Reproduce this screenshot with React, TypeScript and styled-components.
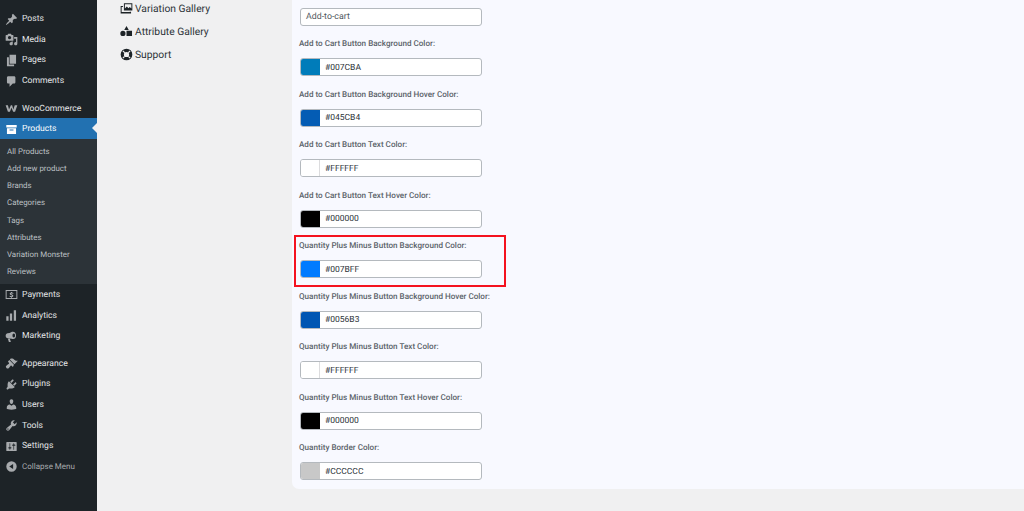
import React from "react";
import styled, { createGlobalStyle } from "styled-components";

const Global = createGlobalStyle`
  html, body { margin: 0; padding: 0; background: #f0f0f1; }
  body { font-family: Roboto, "Open Sans", sans-serif; overflow: hidden; text-rendering: geometricPrecision; }
  * { box-sizing: border-box; }
`;

const Page = styled.div`
  display: flex;
  width: 1024px;
  height: 511px;
  overflow: hidden;
  background: #f0f0f1;
`;

const Sidebar = styled.nav`
  width: 97px;
  flex: none;
  background: #1d2327;
  padding-top: 8px;
  display: flex;
  flex-direction: column;
`;

const MenuGroup = styled.div`
  display: flex;
  flex-direction: column;
  margin-bottom: 7px;
`;

const MenuItem = styled.div<{ $active?: boolean; $dim?: boolean }>`
  position: relative;
  height: 20.6px;
  display: flex;
  align-items: center;
  gap: 4px;
  padding: 2px 0 0 5px;
  font-size: ${(p) => (p.$dim ? "8px" : "8.6px")};
  color: ${(p) => (p.$active ? "#fff" : p.$dim ? "#a7aaad" : "#e4e6e8")};
  background: ${(p) => (p.$active ? "#2271b1" : "transparent")};
  svg { flex: none; width: 13px; height: 13px; fill: ${(p) => (p.$active ? "#fff" : "#a7aaad")}; }
`;

const Notch = styled.span`
  position: absolute;
  right: 0;
  top: 5.5px;
  border: 5px solid transparent;
  border-right-color: #f0f0f1;
  border-left-width: 0;
`;

const Submenu = styled.div`
  background: #2c3338;
  padding: 4px 0 4px 7px;
  display: flex;
  flex-direction: column;
`;

const SubItem = styled.div`
  height: 17.15px;
  display: flex;
  align-items: center;
  padding-top: 0.8px;
  font-size: 7.9px;
  color: #bcc0c4;
`;

const Main = styled.main`
  flex: 1;
  display: flex;
  align-items: flex-start;
`;

const SideTabs = styled.div`
  width: 195px;
  flex: none;
  padding: 0 0 0 23px;
  margin-top: -3.5px;
  display: flex;
  flex-direction: column;
`;

const Tab = styled.div`
  height: 23px;
  display: flex;
  align-items: center;
  gap: 2px;
  font-size: 10.3px;
  color: #2c3338;
  svg { flex: none; width: 13px; height: 13px; fill: #1d2327; }
`;

const Panel = styled.section`
  flex: 1;
  height: 489px;
  background: #f8f9ff;
  border-bottom-left-radius: 7px;
  padding: 7.5px 0 0 8px;
  display: flex;
  flex-direction: column;
`;

const TextBox = styled.div`
  width: 182px;
  height: 18px;
  flex: none;
  background: #fff;
  border: 1px solid #b4b9be;
  border-radius: 3px;
  display: flex;
  align-items: center;
  padding: 1px 0 0 5px;
  font-size: 8.8px;
  color: #50575e;
`;

const Field = styled.div`
  position: relative;
  flex: none;
  height: 50.5px;
  display: flex;
  flex-direction: column;
  padding-top: 12.5px;
`;

const FieldLabel = styled.div`
  height: 11px;
  line-height: 11px;
  font-size: 8.1px;
  font-weight: 500;
  color: #5a6269;
  white-space: nowrap;
  margin-left: -1px;
`;

const ColorBox = styled.div`
  margin-top: 9px;
  width: 182px;
  height: 18px;
  background: #fff;
  border: 1px solid #b4b9be;
  border-radius: 3px;
  display: flex;
  align-items: center;
  overflow: hidden;
  font-size: 8.5px;
  color: #2c3338;
`;

const ColorValue = styled.span`
  padding-top: 1.5px;
`;

const Swatch = styled.span<{ $color: string }>`
  width: 19px;
  height: 100%;
  flex: none;
  margin-right: 5px;
  background: ${(p) => p.$color};
  border-right: 1px solid ${(p) => (p.$color === "#FFFFFF" ? "#dcdcde" : p.$color)};
`;

const Highlight = styled.div`
  position: absolute;
  left: -6px;
  top: 7.5px;
  width: 212px;
  height: 52px;
  border: 2px solid #f4121f;
  pointer-events: none;
`;

const I = {
  posts: "M10.44 3.02l1.82-1.82 6.36 6.35-1.83 1.82c-1.05-.68-2.48-.57-3.41.36l-.75.75c-.92.93-1.04 2.35-.35 3.41l-1.83 1.82-2.41-2.41-2.8 2.79c-.42.42-3.38 2.71-3.8 2.29s1.86-3.39 2.28-3.81l2.79-2.79L4.1 9.36l1.83-1.82c1.05.69 2.48.57 3.4-.36l.75-.75c.93-.92 1.05-2.35.36-3.41z",
  media: "M13 11V4c0-.55-.45-1-1-1h-1.67L9 1H5L3.67 3H2c-.55 0-1 .45-1 1v7c0 .55.45 1 1 1h10c.55 0 1-.45 1-1zM7 4.5c1.38 0 2.5 1.12 2.5 2.5S8.38 9.5 7 9.5 4.5 8.38 4.5 7 5.62 4.5 7 4.5zM14 6h5v10.5c0 1.38-1.12 2.5-2.5 2.5S14 17.88 14 16.5s1.12-2.5 2.5-2.5c.17 0 .34.02.5.05V9h-3V6zm-4 8.05V13h2v3.5c0 1.38-1.12 2.5-2.5 2.5S7 17.88 7 16.5 8.12 14 9.5 14c.17 0 .34.02.5.05z",
  pages: "M7 1h10v14H7zM3 5h3v11h8v3H3z",
  comments: "M5 2h9c1.1 0 2 .9 2 2v7c0 1.1-.9 2-2 2h-2l-5 5v-5H5c-1.1 0-2-.9-2-2V4c0-1.1.9-2 2-2z",
  woo: "M1 5h3.500l1.700 6.500L9 5h2l1.800 6.500L15 5h4l-3.500 10h-3L10 9l-2.500 6h-3z",
  products: "M2 3h16v4H2zM3 8h14v9H3zM7 10v1.500h6V10z",
  payments: "M1 3h18v14H1zM2.500 4.500v11h15v-11zM9.200 6h1.600v1c.9.1 1.700.4 2.200.7l-.5 1.400c-.6-.3-1.400-.6-2.200-.6-.6 0-1 .2-1 .5 0 .4.5.6 1.400.9 1.400.4 2.200 1 2.200 2.100 0 1-.8 1.800-2.100 2v1H9.200v-1c-.9-.1-1.800-.4-2.300-.7l.5-1.400c.6.3 1.500.7 2.400.7.7 0 1.100-.2 1.100-.6s-.5-.6-1.400-.9C8.200 10.700 7.300 10.100 7.300 9c0-1 .7-1.800 1.900-2z",
  analytics: "M2 11h3.500v7H2zM7.500 7H11v11H7.500zM13.500 2H17v16h-3.500z",
  marketing: "M10 3c3.900-1.500 7 1 7 5.500S14 15 10 13.500C8 13 6 12.500 4 12.500 2.500 12.500 1 11 1 8.800S2.500 5 4 5c2 0 4-.8 6-2zm3.500 2.500c-1.200 0-2 1.300-2 3s.8 3 2 3 2-1.300 2-3-.8-3-2-3zM4.500 13.500h3l1.500 5H6z",
  appearance: "M14.480 11.060L7.410 3.990l1.500-1.500c.5-.56 2.300-.47 3.510.32 1.210.8 1.430 1.280 2.910 2.100 1.180.64 2.450 1.260 4.450.85zm-.71.71L6.700 4.700 4.930 6.470c-.39.39-.39 1.020 0 1.410l1.060 1.060c.39.39.39 1.030 0 1.420-.6.6-1.430 1.110-2.210 1.690-.35.26-.7.53-1.010.84C1.430 13.230.76 14.520 2 16.400c.8 1.210 1.800 1.800 3 1.300.8-.3 1.200-1 1.900-1.800.6-.8 1.100-1.700 1.800-2.400.39-.39 1.020-.39 1.410 0l1.060 1.060c.39.39 1.020.39 1.410 0z",
  plugins: "M13.110 4.360L9.870 7.600 8 5.730l3.240-3.240c.35-.34 1.050-.2 1.560.32.52.51.66 1.210.31 1.550zm-8 1.770l.91-1.120 9.010 9.010-1.190.84c-.71.71-2.630 1.160-3.820 1.160H6.140L4.900 17.260c-.59.59-1.540.59-2.120 0-.59-.58-.59-1.530 0-2.120l1.240-1.240v-3.880c0-1.130.4-3.190 1.090-3.890zm7.260 3.970l3.240-3.240c.34-.35 1.040-.21 1.550.31.52.51.66 1.210.31 1.550l-3.240 3.250z",
  users: "M10 9.250c-2.270 0-2.730-3.440-2.730-3.440C7 4.020 7.820 2 9.970 2c2.160 0 2.980 2.020 2.710 3.810 0 0-.41 3.440-2.680 3.440zm0 2.570L12.720 10c2.390 0 4.520 2.330 4.520 4.530v2.490s-3.650 1.130-7.240 1.130c-3.650 0-7.240-1.130-7.240-1.130v-2.490c0-2.250 1.940-4.480 4.470-4.480z",
  tools: "M16.680 9.770c-1.340 1.340-3.300 1.670-4.950.99l-5.410 6.520c-.99.99-2.590.99-3.580 0s-.99-2.590 0-3.570l6.520-5.420c-.68-1.650-.35-3.610.99-4.950 1.280-1.280 3.120-1.620 4.720-1.060l-2.890 2.890 2.820 2.820 2.860-2.870c.53 1.580.18 3.390-1.080 4.650zM3.810 16.210c.4.39 1.040.39 1.430 0 .4-.4.4-1.040 0-1.430-.39-.4-1.030-.4-1.430 0-.39.39-.39 1.030 0 1.430z",
  settings: "M18 16V4c0-.55-.45-1-1-1H3c-.55 0-1 .45-1 1v12c0 .55.45 1 1 1h14c.55 0 1-.45 1-1zM8 11h1c.55 0 1 .45 1 1s-.45 1-1 1H8v1.500c0 .28-.22.5-.5.5s-.5-.22-.5-.5V13H6c-.55 0-1-.45-1-1s.45-1 1-1h1V5.500c0-.28.22-.5.5-.5s.5.22.5.5V11zm5-2h-1c-.55 0-1-.45-1-1s.45-1 1-1h1V5.500c0-.28.22-.5.5-.5s.5.22.5.5V7h1c.55 0 1 .45 1 1s-.45 1-1 1h-1v5.500c0 .28-.22.5-.5.5s-.5-.22-.5-.5V9z",
  collapse: "M10 2a8 8 0 1 0 0 16a8 8 0 0 0 0-16zm2.500 4v8l-6-4z",
  gallery: "M6 2h13v11H6zM7.500 3.500v6.500l3-3 2.500 2.500 2-2 2.500 2.500V3.500zM1 6h3.500v1.500H2.500v8H15V15h2v2.500H1z",
  shapes: "M10 1.500l3.500 6h-7zM0.500 13a4 4 0 1 1 8 0a4 4 0 0 1-8 0zM10 9h8.500v8H10z",
  support: "M10 1a9 9 0 1 0 0 18a9 9 0 0 0 0-18zm0 5a4 4 0 1 1 0 8a4 4 0 0 1 0-8zM5.200 3.800L7.700 6.700 6.700 7.700 3.800 5.200zM14.800 3.800l1.400 1.400-2.900 2.500-1-1zM6.700 12.300l1 1-2.500 2.900-1.400-1.400zM13.300 12.300l2.900 2.500-1.400 1.400-2.500-2.900z",
};

const Icon = ({ d }: { d: string }) => (
  <svg viewBox="0 0 20 20" aria-hidden="true"><path fillRule="evenodd" d={d} /></svg>
);

const fields: [string, string, string][] = [
  ["Add to Cart Button Background Color:", "#007CBA", "#007CBA"],
  ["Add to Cart Button Background Hover Color:", "#045CB4", "#045CB4"],
  ["Add to Cart Button Text Color:", "#FFFFFF", "#FFFFFF"],
  ["Add to Cart Button Text Hover Color:", "#000000", "#000000"],
  ["Quantity Plus Minus Button Background Color:", "#007BFF", "#007BFF"],
  ["Quantity Plus Minus Button Background Hover Color:", "#0056B3", "#0056B3"],
  ["Quantity Plus Minus Button Text Color:", "#FFFFFF", "#FFFFFF"],
  ["Quantity Plus Minus Button Text Hover Color:", "#000000", "#000000"],
  ["Quantity Border Color:", "#CCCCCC", "#C8C8C8"],
];

const subs = ["All Products", "Add new product", "Brands", "Categories", "Tags", "Attributes", "Variation Monster", "Reviews"];

export default function App() {
  return (
    <Page>
      <Global />
      <Sidebar>
        <MenuGroup>
          <MenuItem><Icon d={I.posts} />Posts</MenuItem>
          <MenuItem><Icon d={I.media} />Media</MenuItem>
          <MenuItem><Icon d={I.pages} />Pages</MenuItem>
          <MenuItem><Icon d={I.comments} />Comments</MenuItem>
        </MenuGroup>
        <MenuGroup>
          <MenuItem><Icon d={I.woo} />WooCommerce</MenuItem>
          <MenuItem $active><Icon d={I.products} />Products<Notch /></MenuItem>
          <Submenu>{subs.map((s) => <SubItem key={s}>{s}</SubItem>)}</Submenu>
          <MenuItem><Icon d={I.payments} />Payments</MenuItem>
          <MenuItem><Icon d={I.analytics} />Analytics</MenuItem>
          <MenuItem><Icon d={I.marketing} />Marketing</MenuItem>
        </MenuGroup>
        <MenuGroup>
          <MenuItem><Icon d={I.appearance} />Appearance</MenuItem>
          <MenuItem><Icon d={I.plugins} />Plugins</MenuItem>
          <MenuItem><Icon d={I.users} />Users</MenuItem>
          <MenuItem><Icon d={I.tools} />Tools</MenuItem>
          <MenuItem><Icon d={I.settings} />Settings</MenuItem>
          <MenuItem $dim><Icon d={I.collapse} />Collapse Menu</MenuItem>
        </MenuGroup>
      </Sidebar>
      <Main>
        <SideTabs>
          <Tab><Icon d={I.gallery} />Variation Gallery</Tab>
          <Tab><Icon d={I.shapes} />Attribute Gallery</Tab>
          <Tab><Icon d={I.support} />Support</Tab>
        </SideTabs>
        <Panel>
          <TextBox>Add-to-cart</TextBox>
          {fields.map(([label, value, color], i) => (
            <Field key={label}>
              <FieldLabel>{label}</FieldLabel>
              <ColorBox><Swatch $color={color} /><ColorValue>{value}</ColorValue></ColorBox>
              {i === 4 && <Highlight />}
            </Field>
          ))}
        </Panel>
      </Main>
    </Page>
  );
}
